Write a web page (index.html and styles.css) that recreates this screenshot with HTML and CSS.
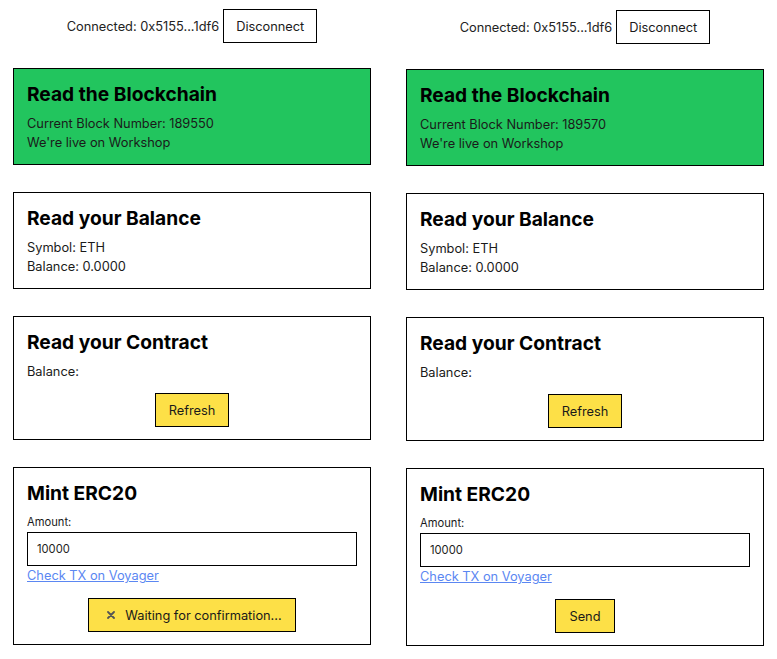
FILE: index.html
```html
<!DOCTYPE html>
<html lang="en">
<head>
<meta charset="utf-8">
<title>Starknet Workshop</title>
<link rel="stylesheet" href="styles.css">
</head>
<body>
<div class="panes">
  <main class="pane">
    <header class="wallet">
      <span class="addr">Connected: 0x5155...1df6</span>
      <button class="btn btn-plain">Disconnect</button>
    </header>
    <section class="card card-green">
      <h2>Read the Blockchain</h2>
      <p>Current Block Number: 189550</p>
      <p>We're live on Workshop</p>
    </section>
    <section class="card">
      <h2>Read your Balance</h2>
      <p>Symbol: ETH</p>
      <p>Balance: 0.0000</p>
    </section>
    <section class="card">
      <h2>Read your Contract</h2>
      <p>Balance:</p>
      <div class="actions"><button class="btn btn-yellow">Refresh</button></div>
    </section>
    <section class="card">
      <h2>Mint ERC20</h2>
      <label class="label" for="amt1">Amount:</label>
      <input id="amt1" class="input" type="text" value="10000">
      <a class="link" href="#">Check TX on Voyager</a>
      <div class="actions actions-tight">
        <button class="btn btn-yellow btn-wait">
          <svg class="spin" width="8" height="8" viewBox="0 0 8 8" aria-hidden="true"><path d="M1 1 L7 7 M7 1 L1 7" stroke="#555" stroke-width="1.8" stroke-linecap="round"/></svg>
          <span>Waiting for confirmation...</span>
        </button>
      </div>
    </section>
  </main>
  <main class="pane pane-right">
    <header class="wallet">
      <span class="addr">Connected: 0x5155...1df6</span>
      <button class="btn btn-plain">Disconnect</button>
    </header>
    <section class="card card-green">
      <h2>Read the Blockchain</h2>
      <p>Current Block Number: 189570</p>
      <p>We're live on Workshop</p>
    </section>
    <section class="card">
      <h2>Read your Balance</h2>
      <p>Symbol: ETH</p>
      <p>Balance: 0.0000</p>
    </section>
    <section class="card">
      <h2>Read your Contract</h2>
      <p>Balance:</p>
      <div class="actions"><button class="btn btn-yellow">Refresh</button></div>
    </section>
    <section class="card">
      <h2>Mint ERC20</h2>
      <label class="label" for="amt2">Amount:</label>
      <input id="amt2" class="input" type="text" value="10000">
      <a class="link" href="#">Check TX on Voyager</a>
      <div class="actions actions-tight"><button class="btn btn-yellow">Send</button></div>
    </section>
  </main>
</div>
</body>
</html>
```
FILE: styles.css
```css
* { box-sizing: border-box; }
html, body { margin: 0; padding: 0; background: #fff; }
body {
  font-family: Inter, "Noto Sans", sans-serif;
  color: #1a1a1a;
}
.panes {
  display: grid;
  grid-template-columns: 358px 358px;
  column-gap: 35px;
  padding: 9px 0 0 13px;
}
.pane {
  display: flex;
  flex-direction: column;
  gap: 27px;
}
.pane-right { padding-top: 1px; }
.wallet {
  display: flex;
  justify-content: center;
  align-items: center;
  gap: 4px;
  margin-bottom: -2px;
  font-size: 12.8px;
}
.addr { color: #222; }
.btn {
  font-family: inherit;
  font-size: 12.8px;
  color: #1a1a1a;
  border: 1px solid #000;
  height: 34px;
  padding: 0 13px;
  border-radius: 0;
  cursor: pointer;
}
.btn-plain { background: #fff; padding: 0 12px; }
.btn-yellow { background: #fde047; }
.btn-wait {
  display: inline-flex;
  align-items: center;
  gap: 10px;
  padding: 0 13px 0 18px;
}
.card {
  border: 1px solid #000;
  padding: 12px 13px 12px;
  display: flex;
  flex-direction: column;
}
.card-green { background: #22c55e; }
.card h2 {
  margin: 0 0 7px;
  font-size: 19.2px;
  line-height: 26px;
  font-weight: 700;
  color: #000;
}
.card p {
  margin: 0;
  font-size: 12.8px;
  line-height: 19px;
}
.actions {
  display: flex;
  justify-content: center;
  margin-top: 12px;
}
.actions-tight { margin-top: 13px; }
.label {
  font-size: 11.2px;
  line-height: 18px;
}
.input {
  font-family: inherit;
  font-size: 11.2px;
  height: 34px;
  width: 330px;
  margin-top: 1px;
  border: 1px solid #000;
  padding: 0 9px;
  color: #222;
  outline: none;
}
.link {
  margin-top: 1px;
  font-size: 12.8px;
  line-height: 18px;
  color: #5b87f2;
  text-decoration: underline;
  align-self: flex-start;
}
```
